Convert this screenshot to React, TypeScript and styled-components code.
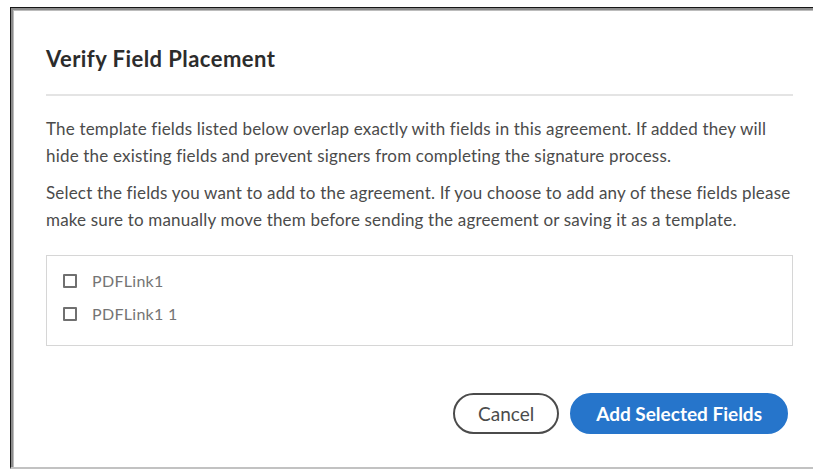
import React from "react";
import styled, { createGlobalStyle } from "styled-components";

const GlobalStyle = createGlobalStyle`
  html, body {
    margin: 0;
    padding: 0;
    background: #ffffff;
    overflow: hidden;
  }
  body {
    font-family: Lato, "Open Sans", "Liberation Sans", sans-serif;
  }
`;

const Page = styled.div`
  box-sizing: border-box;
  width: 813px;
  height: 471px;
  padding: 7px 0 0 10px;
  overflow: hidden;
`;

const Dialog = styled.section`
  box-sizing: border-box;
  width: 830px;
  height: 462px;
  background: #ffffff;
  border-top: 1px solid #161616;
  border-left: 1px solid #161616;
  border-bottom: 2px solid #c2c2c2;
  box-shadow: inset 2px 2px 0 #8c8c8c, inset 3px 3px 0 #bcbcbc;
  padding: 37px 0 0 35px;
  display: flex;
  flex-direction: column;
`;

const Content = styled.div`
  width: 747px;
  display: flex;
  flex-direction: column;
`;

const Title = styled.h2`
  margin: 0;
  font-size: 22px;
  line-height: 28px;
  letter-spacing: 0.45px;
  font-weight: 700;
  color: #2c2c2c;
`;

const Divider = styled.hr`
  margin: 21px 0 0;
  border: none;
  height: 2px;
  background: #e4e4e4;
`;

const Text = styled.p<{ $first?: boolean }>`
  margin: ${(p) => (p.$first ? "19px" : "10px")} 0 0;
  font-size: 17px;
  line-height: 27px;
  letter-spacing: 0.18px;
  color: #4b4b4b;
`;

const FieldList = styled.ul`
  list-style: none;
  margin: 22px 0 0;
  padding: 8px 16px 15px;
  border: 1px solid #d6d6d6;
  display: flex;
  flex-direction: column;
`;

const FieldRow = styled.li`
  height: 33px;
  display: flex;
  align-items: center;
  gap: 15px;
`;

const Box = styled.span`
  box-sizing: border-box;
  width: 14px;
  height: 14px;
  border: 2px solid #707070;
  border-radius: 1px;
  flex: none;
`;

const FieldLabel = styled.span`
  font-size: 16px;
  letter-spacing: 0.3px;
  color: #747474;
`;

const Actions = styled.div`
  margin-top: 47px;
  padding-right: 5px;
  display: flex;
  justify-content: flex-end;
  gap: 11px;
`;

const Button = styled.button<{ $primary?: boolean }>`
  box-sizing: border-box;
  height: 41px;
  padding: 0 ${(p) => (p.$primary ? "24px" : "23px")};
  border-radius: 21px;
  font-family: inherit;
  font-size: 19px;
  font-weight: ${(p) => (p.$primary ? 700 : 400)};
  border: 2px solid ${(p) => (p.$primary ? "#2675cb" : "#4b4b4b")};
  background: ${(p) => (p.$primary ? "#2675cb" : "#ffffff")};
  color: ${(p) => (p.$primary ? "#ffffff" : "#4b4b4b")};
  cursor: pointer;
`;

const fields = ["PDFLink1", "PDFLink1 1"];

export default function App() {
  return (
    <>
      <GlobalStyle />
      <Page>
        <Dialog>
          <Content>
            <Title>Verify Field Placement</Title>
            <Divider />
            <Text $first>
              The template fields listed below overlap exactly with fields in this agreement. If added they will
              hide the existing fields and prevent signers from completing the signature process.
            </Text>
            <Text>
              Select the fields you want to add to the agreement. If you choose to add any of these fields please
              make sure to manually move them before sending the agreement or saving it as a template.
            </Text>
            <FieldList>
              {fields.map((f) => (
                <FieldRow key={f}>
                  <Box />
                  <FieldLabel>{f}</FieldLabel>
                </FieldRow>
              ))}
            </FieldList>
            <Actions>
              <Button>Cancel</Button>
              <Button $primary>Add Selected Fields</Button>
            </Actions>
          </Content>
        </Dialog>
      </Page>
    </>
  );
}
